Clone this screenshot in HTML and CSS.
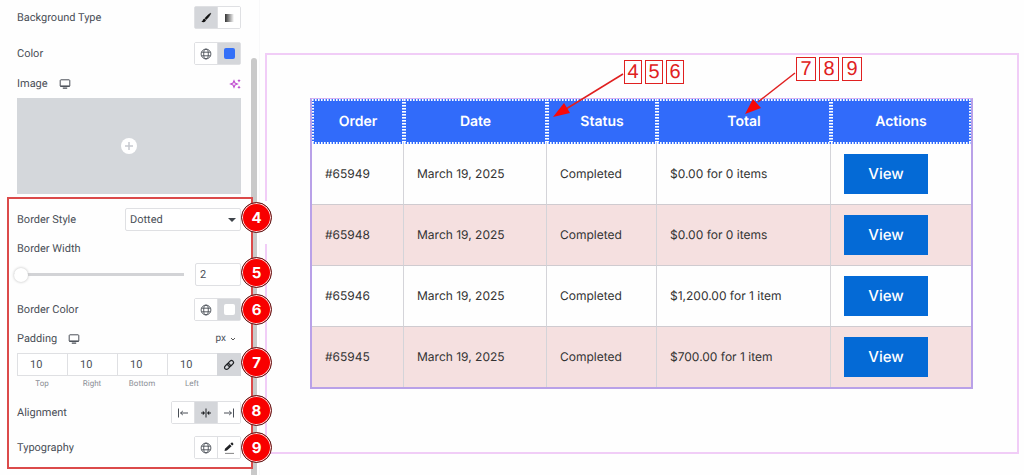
FILE: index.html
```html
<!DOCTYPE html>
<html lang="en">
<head>
<meta charset="utf-8">
<title>Orders table style</title>
<link rel="stylesheet" href="styles.css">
</head>
<body>
<svg class="defs" width="0" height="0" aria-hidden="true">
  <symbol id="globe" viewBox="0 0 12 12"><g fill="none" stroke="#4a4f57" stroke-width="0.9"><circle cx="6" cy="6" r="4.9"/><ellipse cx="6" cy="6" rx="2.3" ry="4.9"/><path d="M1.6 4.2h8.8M1.6 7.8h8.8"/></g></symbol>
  <symbol id="desktop" viewBox="0 0 12 12"><rect x="1.2" y="1.8" width="9.600" height="6.6" rx="0.8" fill="none" stroke="#4a4f57"/><path d="M1.2 8.2h9.600M3.8 10.200h4.4" stroke="#4a4f57" stroke-width="1.2"/></symbol>
  <symbol id="align-start" viewBox="0 0 12 12"><path d="M1.5 1.5v9M3.5 6h7.5M5.8 4L3.6 6l2.2 2" fill="none" stroke="#4a4f57"/></symbol>
  <symbol id="align-center" viewBox="0 0 12 12"><path d="M6 1.5v9M1 6h3.2M11 6H7.8" fill="none" stroke="#1f2124"/><path d="M2.8 3.8L5 6 2.8 8.2zM9.2 3.8L7 6l2.2 2.2z" fill="#1f2124"/></symbol>
</svg>
<div class="editor">
  <aside class="panel">
    <div class="scroll-thumb"></div>
    <div class="group top-group">
      <div class="row">
        <span class="label">Background Type</span>
        <div class="buttons">
          <button class="btn active" aria-label="Classic"><svg class="icon" viewBox="0 0 12 12"><path d="M10.8 1.2C8.5 2.2 6.3 4.400 4.900 6.400l1.300 1.100C8.200 5.700 10 3.600 10.800 1.200z" fill="#111" stroke="#111" stroke-width="0.6"/><path d="M4.500 6.800C3.200 6.700 3 8 2.600 8.700 2.200 9.300 1.600 9.300 1.200 9.300c1.500 1.600 4.600 1.200 4.700-1.200z" fill="#111"/></svg></button>
          <button class="btn" aria-label="Gradient"><span class="gradient"></span></button>
        </div>
      </div>
      <div class="row">
        <span class="label">Color</span>
        <div class="buttons">
          <button class="btn" aria-label="Global colors"><svg class="icon"><use href="#globe"/></svg></button>
          <button class="btn active" aria-label="Pick color"><span class="swatch blue"></span></button>
        </div>
      </div>
      <div class="stack">
        <div class="row title">
          <span class="label">Image</span>
          <svg class="icon device"><use href="#desktop"/></svg>
          <svg class="icon end" viewBox="0 0 12 12"><path d="M5 2.600l1 2.400 2.400 1-2.400 1-1 2.400L4 7 1.600 6 4 5z" fill="none" stroke="#c04bd0" stroke-width="1.100"/><path d="M10 1l.5 1.200 1.200.5-1.200.5L10 4.400l-.5-1.200-1.200-.5 1.200-.5zM10 7.600l.5 1.200 1.200.5-1.200.5L10 11l-.5-1.200-1.200-.5 1.200-.5z" fill="#b02ec4"/></svg>
        </div>
        <button class="media" aria-label="Choose image"><svg class="plus" viewBox="0 0 16 16"><circle cx="8" cy="8" r="8" fill="#fff"/><path d="M8 4v8M4 8h8" stroke="#c6c9cf" stroke-width="1.500"/></svg></button>
      </div>
    </div>

    <section class="group marked">
      <div class="row">
        <label class="label" for="style">Border Style</label>
        <div class="select-wrap">
          <select id="style"><option>Dotted</option><option>Solid</option></select>
          <svg class="caret" viewBox="0 0 8 4"><path d="M0 0h8L4 4z" fill="#3f444b"/></svg>
        </div>
        <span class="badge">4</span>
      </div>
      <div class="stack">
        <div class="row title"><label class="label" for="width">Border Width</label></div>
        <div class="row">
          <input class="slider" type="range" min="0" max="100" value="0" aria-label="Border width slider">
          <input class="number" id="width" type="text" value="2">
          <span class="badge">5</span>
        </div>
      </div>
      <div class="row">
        <span class="label">Border Color</span>
        <div class="buttons">
          <button class="btn" aria-label="Global colors"><svg class="icon"><use href="#globe"/></svg></button>
          <button class="btn active" aria-label="Pick border color"><span class="swatch white"></span></button>
        </div>
        <span class="badge low">6</span>
      </div>
      <div class="stack">
        <div class="row title">
          <span class="label">Padding</span>
          <svg class="icon device"><use href="#desktop"/></svg>
          <button class="unit end">px <svg class="chevron" viewBox="0 0 6 4"><path d="M1 1l2 2 2-2" fill="none" stroke="#555"/></svg></button>
        </div>
        <div class="row sides">
          <div class="side"><input id="pt" type="text" value="10"><label for="pt">Top</label></div>
          <div class="side"><input id="pr" type="text" value="10"><label for="pr">Right</label></div>
          <div class="side"><input id="pb" type="text" value="10"><label for="pb">Bottom</label></div>
          <div class="side"><input id="pl" type="text" value="10"><label for="pl">Left</label></div>
          <button class="btn active link" aria-label="Link values"><svg class="icon" viewBox="0 0 12 12"><g fill="none" stroke="#1f2124" stroke-width="1.200" transform="rotate(-45 6 6)"><rect x="0.500" y="4" width="6.500" height="4" rx="2"/><rect x="5" y="4" width="6.500" height="4" rx="2"/></g></svg></button>
          <span class="badge">7</span>
        </div>
      </div>
      <div class="row">
        <span class="label">Alignment</span>
        <div class="buttons">
          <button class="btn" aria-label="Start"><svg class="icon"><use href="#align-start"/></svg></button>
          <button class="btn active" aria-label="Center"><svg class="icon"><use href="#align-center"/></svg></button>
          <button class="btn" aria-label="End"><svg class="icon flip"><use href="#align-start"/></svg></button>
        </div>
        <span class="badge">8</span>
      </div>
      <div class="row">
        <span class="label">Typography</span>
        <div class="buttons">
          <button class="btn" aria-label="Global fonts"><svg class="icon"><use href="#globe"/></svg></button>
          <button class="btn" aria-label="Edit typography"><svg class="icon" viewBox="0 0 12 12"><path d="M1.500 9l.5-2.300 4.700-4.400 1.900 1.900L3.900 8.600z" fill="#1f2124"/><path d="M7.400 1.700l1-.9c.5-.4 1-.3 1.400.1l.4.500c.4.400.3.900-.1 1.300l-.9.900z" fill="#1f2124"/><path d="M2 11.400h9" stroke="#777" stroke-width="0.900"/></svg></button>
        </div>
        <span class="badge low">9</span>
      </div>
    </section>
  </aside>

  <main class="canvas">
    <div class="container">
      <button class="collapse" aria-label="Hide panel"></button>
      <table class="orders">
        <colgroup><col class="c-order"><col class="c-date"><col class="c-status"><col class="c-total"><col class="c-actions"></colgroup>
        <thead><tr><th>Order</th><th>Date</th><th>Status</th><th>Total</th><th>Actions</th></tr></thead>
        <tbody>
          <tr><td>#65949</td><td>March 19, 2025</td><td>Completed</td><td>$0.00 for 0 items</td><td><a class="view" href="#65949">View</a></td></tr>
          <tr><td>#65948</td><td>March 19, 2025</td><td>Completed</td><td>$0.00 for 0 items</td><td><a class="view" href="#65948">View</a></td></tr>
          <tr><td>#65946</td><td>March 19, 2025</td><td>Completed</td><td>$1,200.00 for 1 item</td><td><a class="view" href="#65946">View</a></td></tr>
          <tr><td>#65945</td><td>March 19, 2025</td><td>Completed</td><td>$700.00 for 1 item</td><td><a class="view" href="#65945">View</a></td></tr>
        </tbody>
      </table>
      <div class="callout border-callout">
        <svg class="arrow" width="72" height="48" viewBox="0 0 72 48"><path d="M71 2L14 37" stroke="#e02020" stroke-width="1.500"/><path d="M1 45L12 31l6 10z" fill="#f80808"/></svg>
        <span>4</span><span>5</span><span>6</span>
      </div>
      <div class="callout text-callout">
        <svg class="arrow" width="52" height="48" viewBox="0 0 52 48"><path d="M51 4L14 33" stroke="#e02020" stroke-width="1.500"/><path d="M1 45l8-15 8 9z" fill="#f80808"/></svg>
        <span>7</span><span>8</span><span>9</span>
      </div>
    </div>
  </main>
</div>
</body>
</html>
```
FILE: styles.css
```css
* { box-sizing: border-box; }
body { margin: 0; background: #fefefe; color: #4a4f57; font: 11px/12px Roboto, sans-serif; text-rendering: geometricPrecision; }
button, input, select { font: inherit; color: inherit; margin: 0; padding: 0; text-rendering: inherit; }
.defs { position: absolute; }
.editor { display: grid; grid-template-columns: 260px 1fr; min-height: 100vh; }

.panel { position: relative; border-right: 1px solid #f8f8f9; padding-bottom: 5px; }
.scroll-thumb { position: absolute; left: 251px; top: 58px; bottom: 0; width: 6px; border-radius: 3px 3px 0 0; background: #c9c9c9; }
.group { display: flex; flex-direction: column; gap: 12px; }
.top-group { gap: 13px; padding: 6px 18px 0 17px; }
.marked { position: relative; margin: 3px 6px 0 7px; padding: 9px 10px 8px 8px; border: 2px solid #db4a4a; }
.stack { display: flex; flex-direction: column; gap: 8px; }
.row { position: relative; display: flex; align-items: center; justify-content: space-between; min-height: 23px; }
.row.title { min-height: 12px; justify-content: flex-start; gap: 11px; }
.end { margin-left: auto; }
.icon { display: block; width: 12px; height: 12px; flex: none; }
.flip { transform: scaleX(-1); }

.buttons { display: flex; height: 23px; border: 1px solid #dfe0e3; border-radius: 2px; }
.btn { display: flex; align-items: center; justify-content: center; width: 22px; border: 0; background: #fff; }
.buttons .btn + .btn { width: 23px; border-left: 1px solid #dfe0e3; }
.btn.active { background: #d4d6da; }
.gradient { width: 9px; height: 8px; background: linear-gradient(90deg, #333, #fff); }
.swatch { width: 11px; height: 11px; border-radius: 2px; }
.blue { background: #3470f8; }
.white { background: #fff; }
.media { display: flex; align-items: center; justify-content: center; height: 96px; border: 0; background: #d4d7db; }
.plus { width: 16px; height: 16px; }

.select-wrap { position: relative; width: 116px; }
select { appearance: none; width: 100%; height: 23px; padding: 0 4px; border: 1px solid #dfe0e3; border-radius: 2px; background: #fff; }
.caret { position: absolute; right: 5px; top: 10px; width: 8px; height: 4px; }
.slider { appearance: none; flex: 1; min-width: 0; height: 14px; margin: 0 11px 0 -3px; background: linear-gradient(#d2d3d6, #d2d3d6) center / 100% 3px no-repeat; }
.slider::-webkit-slider-thumb { appearance: none; width: 14px; height: 14px; border-radius: 50%; background: #fff; box-shadow: 0 0 3px #bbb; }
.number { width: 46px; height: 23px; padding: 0 4px; border: 1px solid #dfe0e3; border-radius: 2px; background: #fff; }
.unit { display: flex; align-items: center; gap: 4px; margin-right: 5px; border: 0; background: none; font-size: 10px; line-height: 12px; }
.chevron { width: 6px; height: 4px; }
.sides { align-items: flex-start; }
.side { flex: 1; min-width: 0; display: flex; flex-direction: column; gap: 3px; }
.side input { width: 100%; height: 23px; padding: 0 12px; border: 1px solid #dfe0e3; border-right: 0; background: #fff; }
.side label { font-size: 8px; line-height: 10px; color: #8b8f96; text-align: center; }
.link { width: 24px; height: 23px; }
.badge { position: absolute; right: -31px; top: -6px; z-index: 2; width: 31px; height: 31px; border: 1px solid #5c2020; border-radius: 50%; background: #f80000; box-shadow: inset 0 0 0 1px #ffd9d9; color: #fff; font: 700 15px/29px Inter, sans-serif; text-align: center; }
.badge.low { top: -4px; }

.canvas { padding: 53px 6px 22px 5px; }
.container { position: relative; padding: 43px 44px 63px 43px; border: 2px solid #f1cdf7; }
.collapse { position: absolute; left: -3px; top: 146px; width: 8px; height: 43px; border: 0; background: #fefefe; }
.orders { width: 100%; table-layout: fixed; border: 2px solid #b9a1e8; border-top: 1px solid #d6b4f2; border-spacing: 0; font: 12px/16px Inter, sans-serif; color: #333; }
.c-order { width: 92px; }
.c-date { width: 143px; }
.c-status { width: 110px; }
.c-total { width: 174px; }
.c-actions { width: 140px; }
th { height: 45px; padding: 0; color: #fff; font-size: 14px; font-weight: 600; text-align: center;
  --h: repeating-linear-gradient(90deg, #fff 0 1px, #a9c4ff 1px 2px, #316bfa 2px 3px);
  --v: repeating-linear-gradient(#fff 0 1px, #a9c4ff 1px 2px, #316bfa 2px 3px);
  background: var(--h) top / 100% 2px no-repeat, var(--h) bottom / 100% 2px no-repeat, var(--v) left / 2px 100% no-repeat, var(--v) right / 2px 100% no-repeat, #316bfa; }
td { padding: 10px 0 10px 13px; border-right: 1px solid #d4d4d9; border-bottom: 1px solid #cfcbd0; }
td:last-child { border-right: 0; }
tbody tr:last-child td { border-bottom: 0; }
tbody tr:nth-child(even) { background: #f5e0e0; }
.view { display: block; width: 84px; background: #046ad6; color: #fff; font-size: 15px; font-weight: 500; line-height: 40px; text-align: center; text-decoration: none; }

.callout { position: absolute; display: flex; align-items: center; gap: 3px; color: #e02020; font: 20px/22px "Liberation Sans", sans-serif; }
.callout span { width: 18px; border: 1px solid #e02020; text-align: center; }
.border-callout { left: 357px; top: 5px; }
.text-callout { left: 529px; top: 2px; }
.text-callout span { width: 20px; }
.arrow { position: absolute; right: 100%; top: 12px; }
```
